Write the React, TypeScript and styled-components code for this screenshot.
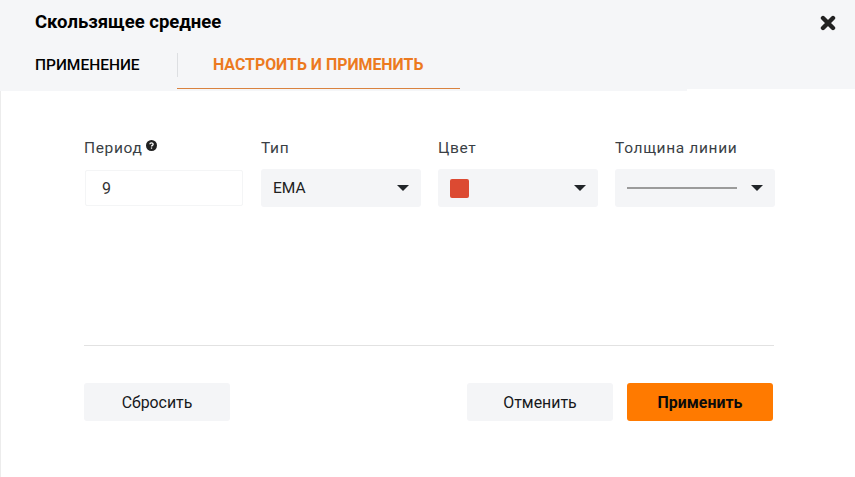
import styled, { createGlobalStyle } from "styled-components";

const GlobalStyle = createGlobalStyle`
  html, body {
    margin: 0;
    padding: 0;
    background: #fff;
    font-family: Roboto, "Liberation Sans", sans-serif;
  }
`;

const Modal = styled.div`
  width: 855px;
  height: 477px;
  display: flex;
  flex-direction: column;
  overflow: hidden;
`;
const Header = styled.div`
  height: 89px;
  background: #f5f6f8;
  display: flex;
  flex-direction: column;
  position: relative;
  /* the grey runs a bit lower on the left part of the header */
  &::after {
    content: "";
    position: absolute;
    left: 0;
    top: 89px;
    width: 687px;
    height: 2px;
    background: #f5f6f8;
  }
`;
const TitleRow = styled.div`
  height: 44px;
  box-sizing: border-box;
  padding: 0 19px 1px 35px;
  display: flex;
  align-items: center;
  justify-content: space-between;
`;
const Title = styled.div`
  font-size: 18.5px;
  font-weight: 700;
  color: #000;
`;
const CloseIcon = styled.svg`
  width: 16px;
  height: 16px;
  display: block;
  margin-top: 3px;
`;
const Tabs = styled.div`
  height: 45px;
  display: flex;
  align-items: stretch;
  position: relative;
  z-index: 1;
`;
const FirstTab = styled.div`
  width: 177px;
  padding: 0 0 4px 35px;
  box-sizing: border-box;
  display: flex;
  align-items: center;
  font-size: 15.5px;
  font-weight: 500;
  color: #000;
  position: relative;
  &::after {
    content: "";
    position: absolute;
    right: -1px;
    top: 9px;
    width: 1px;
    height: 24px;
    background: #dddfe2;
  }
`;
const ActiveTab = styled.div`
  width: 283px;
  padding: 0 0 4px 36px;
  box-sizing: border-box;
  display: flex;
  align-items: center;
  font-size: 15.9px;
  font-weight: 700;
  color: #ec7a1f;
  border-bottom: 1px solid #d9823f;
`;
const Body = styled.div`
  flex: 1;
  border-left: 1px solid #ececec;
  padding: 49px 81px 0 83px;
  display: flex;
  flex-direction: column;
`;
const Fields = styled.div`
  display: grid;
  grid-template-columns: repeat(4, 160px);
  column-gap: 17px;
  height: 207px;
  border-bottom: 1px solid #e2e2e2;
  align-content: start;
`;
const Field = styled.div`
  display: flex;
  flex-direction: column;
  gap: 9px;
`;
const Label = styled.div`
  height: 22px;
  display: flex;
  font-size: 15.5px;
  line-height: 21px;
  color: #3a3f45;
  letter-spacing: 0.65px;
`;
const HelpIcon = styled.svg`
  width: 11px;
  height: 11px;
  margin: 2px 0 0 4px;
`;
const Input = styled.div`
  height: 36px;
  margin: 1px;
  box-sizing: border-box;
  border: 1px solid #f4f5f6;
  border-radius: 2px;
  padding-left: 16px;
  display: flex;
  align-items: center;
  font-size: 16px;
  color: #333;
`;
const Select = styled.div`
  height: 38px;
  background: #f4f5f7;
  border-radius: 3px;
  padding: 0 12px;
  display: flex;
  align-items: center;
  justify-content: space-between;
  font-size: 15.5px;
  color: #212121;
`;
const Caret = styled.span`
  width: 0;
  height: 0;
  border-left: 6.5px solid transparent;
  border-right: 6.5px solid transparent;
  border-top: 6.5px solid #212529;
`;
const Swatch = styled.span`
  width: 19px;
  height: 19px;
  border-radius: 2px;
  background: #dc4a32;
`;
const LineSample = styled.span`
  width: 110px;
  height: 2px;
  background: #9b9b9b;
`;
const Actions = styled.div`
  margin-top: 37px;
  padding-right: 1px;
  display: flex;
  gap: 14px;
`;
const Button = styled.button<{ $primary?: boolean; $pushed?: boolean }>`
  width: 146px;
  height: 38px;
  border: none;
  border-radius: 3px;
  margin-left: ${(p) => (p.$pushed ? "auto" : "0")};
  background: ${(p) => (p.$primary ? "#ff7a00" : "#f4f5f7")};
  color: ${(p) => (p.$primary ? "#0b0b0b" : "#17191c")};
  font-family: inherit;
  font-size: 15.9px;
  font-weight: ${(p) => (p.$primary ? 700 : 400)};
  padding: 0;
`;

export default function App() {
  return (
    <Modal>
      <GlobalStyle />
      <Header>
        <TitleRow>
          <Title>Скользящее среднее</Title>
          <CloseIcon viewBox="0 0 16 16">
            <path
              d="M3 3 L13 13 M13 3 L3 13"
              stroke="#222"
              strokeWidth="4.4"
              strokeLinecap="round"
              fill="none"
            />
          </CloseIcon>
        </TitleRow>
        <Tabs>
          <FirstTab>ПРИМЕНЕНИЕ</FirstTab>
          <ActiveTab>НАСТРОИТЬ И ПРИМЕНИТЬ</ActiveTab>
        </Tabs>
      </Header>
      <Body>
        <Fields>
          <Field>
            <Label>
              Период
              <HelpIcon viewBox="0 0 12 12">
                <circle cx="6" cy="6" r="6" fill="#212121" />
                <path
                  d="M4.2 4.7 C4.2 2.6 7.8 2.6 7.8 4.6 C7.8 5.9 6 5.8 6 7.2"
                  stroke="#fff"
                  strokeWidth="1.4"
                  fill="none"
                />
                <rect x="5.3" y="8.1" width="1.4" height="1.4" fill="#fff" />
              </HelpIcon>
            </Label>
            <Input>9</Input>
          </Field>
          <Field>
            <Label>Тип</Label>
            <Select>
              EMA
              <Caret />
            </Select>
          </Field>
          <Field>
            <Label>Цвет</Label>
            <Select>
              <Swatch />
              <Caret />
            </Select>
          </Field>
          <Field>
            <Label>Толщина линии</Label>
            <Select>
              <LineSample />
              <Caret />
            </Select>
          </Field>
        </Fields>
        <Actions>
          <Button>Сбросить</Button>
          <Button $pushed>Отменить</Button>
          <Button $primary>Применить</Button>
        </Actions>
      </Body>
    </Modal>
  );
}
